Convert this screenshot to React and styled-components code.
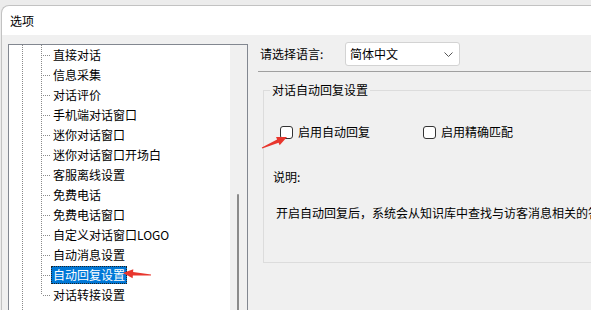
import styled, { createGlobalStyle } from 'styled-components';

const GlobalStyle = createGlobalStyle`
    html, body {
        margin:0;
        padding:0;
    }
    body {
        font-family:"Noto Sans CJK SC", "Microsoft YaHei", sans-serif;
        font-size:12px;
        color:#000;
        background:#ececec;
    }
`;

const Frame = styled.div`
    position:relative;
    width:591px;
    height:310px;
    overflow:hidden;
    background:#ececec;
`;

const Window = styled.div`
    margin:5px 0 0 1px;
    height:305px;
    border:1px solid #c2c2c2;
    border-right:none;
    border-bottom:none;
    border-top-left-radius:8px;
    overflow:hidden;
    background:#fff;
    display:flex;
    flex-direction:column;
`;

const TitleBar = styled.div`
    height:29px;
    flex:none;
    display:flex;
    align-items:center;
    padding-left:8px;
    line-height:16px;
`;

const Body = styled.div`
    flex:1;
    display:flex;
    background:#f0f0f0;
    padding:7px 0 0 6px;
`;

const TreePanel = styled.div`
    width:240px;
    flex:none;
    margin-top:2px;
    box-sizing:border-box;
    border:1px solid #828790;
    border-bottom:none;
    display:flex;
    background:#fff;
`;

const TreeList = styled.ul`
    flex:1;
    margin:0;
    padding:0;
    list-style:none;
    background-image:repeating-linear-gradient(to bottom, #8a8a8a 0 1px, transparent 1px 2px);
    background-size:1px 100%;
    background-position:13px 0;
    background-repeat:no-repeat;
`;

const Row = styled.li`
    position:relative;
    height:20px;
    display:flex;
    align-items:center;
    padding-left:33px;

    &::before {
        content:'';
        position:absolute;
        left:32px;
        top:0;
        width:1px;
        height:${p => (p.$last ? '10px' : '20px')};
        background-image:repeating-linear-gradient(to bottom, #8a8a8a 0 1px, transparent 1px 2px);
    }
`;

const Connector = styled.span`
    width:9px;
    height:1px;
    flex:none;
    background-image:repeating-linear-gradient(to right, transparent 0 1px, #8a8a8a 1px 2px);
`;

const Label = styled.span`
    padding:1px 2px;
    line-height:16px;
    white-space:nowrap;
    background:${p => (p.$selected ? '#0078d7' : 'transparent')};
    color:${p => (p.$selected ? '#fff' : '#000')};
    outline:${p => (p.$selected ? '1px dotted #222' : 'none')};
    outline-offset:-1px;
`;

const Scrollbar = styled.div`
    width:17px;
    flex:none;
    background:#f0f0f0;
    display:flex;
    padding:149px 0 0 7px;
    box-sizing:border-box;
`;

const Thumb = styled.div`
    width:2px;
    background:#8b8b8b;
    border-radius:1px;
`;

const Settings = styled.div`
    flex:1;
    min-width:0;
    padding-left:12px;
    display:flex;
    flex-direction:column;
`;

const LangRow = styled.div`
    display:flex;
    align-items:center;
    height:24px;
`;

const LangLabel = styled.span`
    width:85px;
    line-height:16px;
`;

const Select = styled.div`
    width:115px;
    height:24px;
    box-sizing:border-box;
    border:1px solid #d3d3d3;
    border-radius:3px;
    background:#fff;
    display:flex;
    align-items:center;
    justify-content:space-between;
    padding:0 6px 0 4px;
    line-height:16px;
`;

const Separator = styled.div`
    height:1px;
    margin:5px 0 0 -2px;
    background:#a0a0a0;
`;

const GroupBox = styled.fieldset`
    margin:10px -20px 0 3px;
    padding:0 0 41px 6px;
    border:1px solid #dcdcdc;
    min-width:0;
`;

const Legend = styled.legend`
    padding:0 2px;
    line-height:16px;
`;

const CheckRow = styled.div`
    display:flex;
    align-items:center;
    gap:53px;
    height:16px;
    margin:26px 0 0 10px;
`;

const CheckItem = styled.label`
    display:flex;
    align-items:center;
    gap:5px;
    line-height:16px;
`;

const Box = styled.span`
    width:13px;
    height:13px;
    box-sizing:border-box;
    border:1px solid #333;
    border-radius:3px;
    background:#fff;
`;

const Text = styled.div`
    line-height:16px;
    white-space:nowrap;
    margin:${p => p.$margin};
`;

const Overlay = styled.svg`
    position:absolute;
    left:0;
    top:0;
    pointer-events:none;
`;

const items = [
    '直接对话',
    '信息采集',
    '对话评价',
    '手机端对话窗口',
    '迷你对话窗口',
    '迷你对话窗口开场白',
    '客服离线设置',
    '免费电话',
    '免费电话窗口',
    '自定义对话窗口LOGO',
    '自动消息设置',
    '自动回复设置',
    '对话转接设置',
];

// tapered red annotation arrow from tail to tip
const arrowPoints = (x1, y1, x2, y2) => {
    const dx = x2 - x1, dy = y2 - y1;
    const len = Math.hypot(dx, dy);
    const ux = dx / len, uy = dy / len;
    const nx = -uy, ny = ux;
    const head = 10;
    const bx = x2 - ux * head, by = y2 - uy * head;
    const pts = [
        [x1 + nx * 0.5, y1 + ny * 0.5],
        [bx + nx * 1.8, by + ny * 1.8],
        [bx + nx * 4.5, by + ny * 4.5],
        [x2, y2],
        [bx - nx * 4.5, by - ny * 4.5],
        [bx - nx * 1.8, by - ny * 1.8],
        [x1 - nx * 0.5, y1 - ny * 0.5],
    ];
    return pts.map(p => p.join(',')).join(' ');
};

const App = () => {
    return (
        <Frame>
            <GlobalStyle />
            <Window>
                <TitleBar>选项</TitleBar>
                <Body>
                    <TreePanel>
                        <TreeList>
                            {items.map((name, i) => (
                                <Row key={name} $last={i === items.length - 1}>
                                    <Connector />
                                    <Label $selected={name === '自动回复设置'}>{name}</Label>
                                </Row>
                            ))}
                        </TreeList>
                        <Scrollbar>
                            <Thumb />
                        </Scrollbar>
                    </TreePanel>
                    <Settings>
                        <LangRow>
                            <LangLabel>请选择语言:</LangLabel>
                            <Select>
                                <span>简体中文</span>
                                <svg width="9" height="5" viewBox="0 0 9 5">
                                    <path d="M0.5 0.5 L4.5 4.5 L8.5 0.5" fill="none" stroke="#555" strokeWidth="1" />
                                </svg>
                            </Select>
                        </LangRow>
                        <Separator />
                        <GroupBox>
                            <Legend>对话自动回复设置</Legend>
                            <CheckRow>
                                <CheckItem><Box />启用自动回复</CheckItem>
                                <CheckItem><Box />启用精确匹配</CheckItem>
                            </CheckRow>
                            <Text $margin="29px 0 0 3px">说明:</Text>
                            <Text $margin="20px 0 0 6px">开启自动回复后，系统会从知识库中查找与访客消息相关的答案自动回复访客。</Text>
                        </GroupBox>
                    </Settings>
                </Body>
            </Window>
            <Overlay width="591" height="310">
                <polygon points={arrowPoints(262, 148, 287, 137)} fill="#e8362d" />
                <polygon points={arrowPoints(151, 275, 123, 273)} fill="#e8362d" />
            </Overlay>
        </Frame>
    );
};

export default App;
